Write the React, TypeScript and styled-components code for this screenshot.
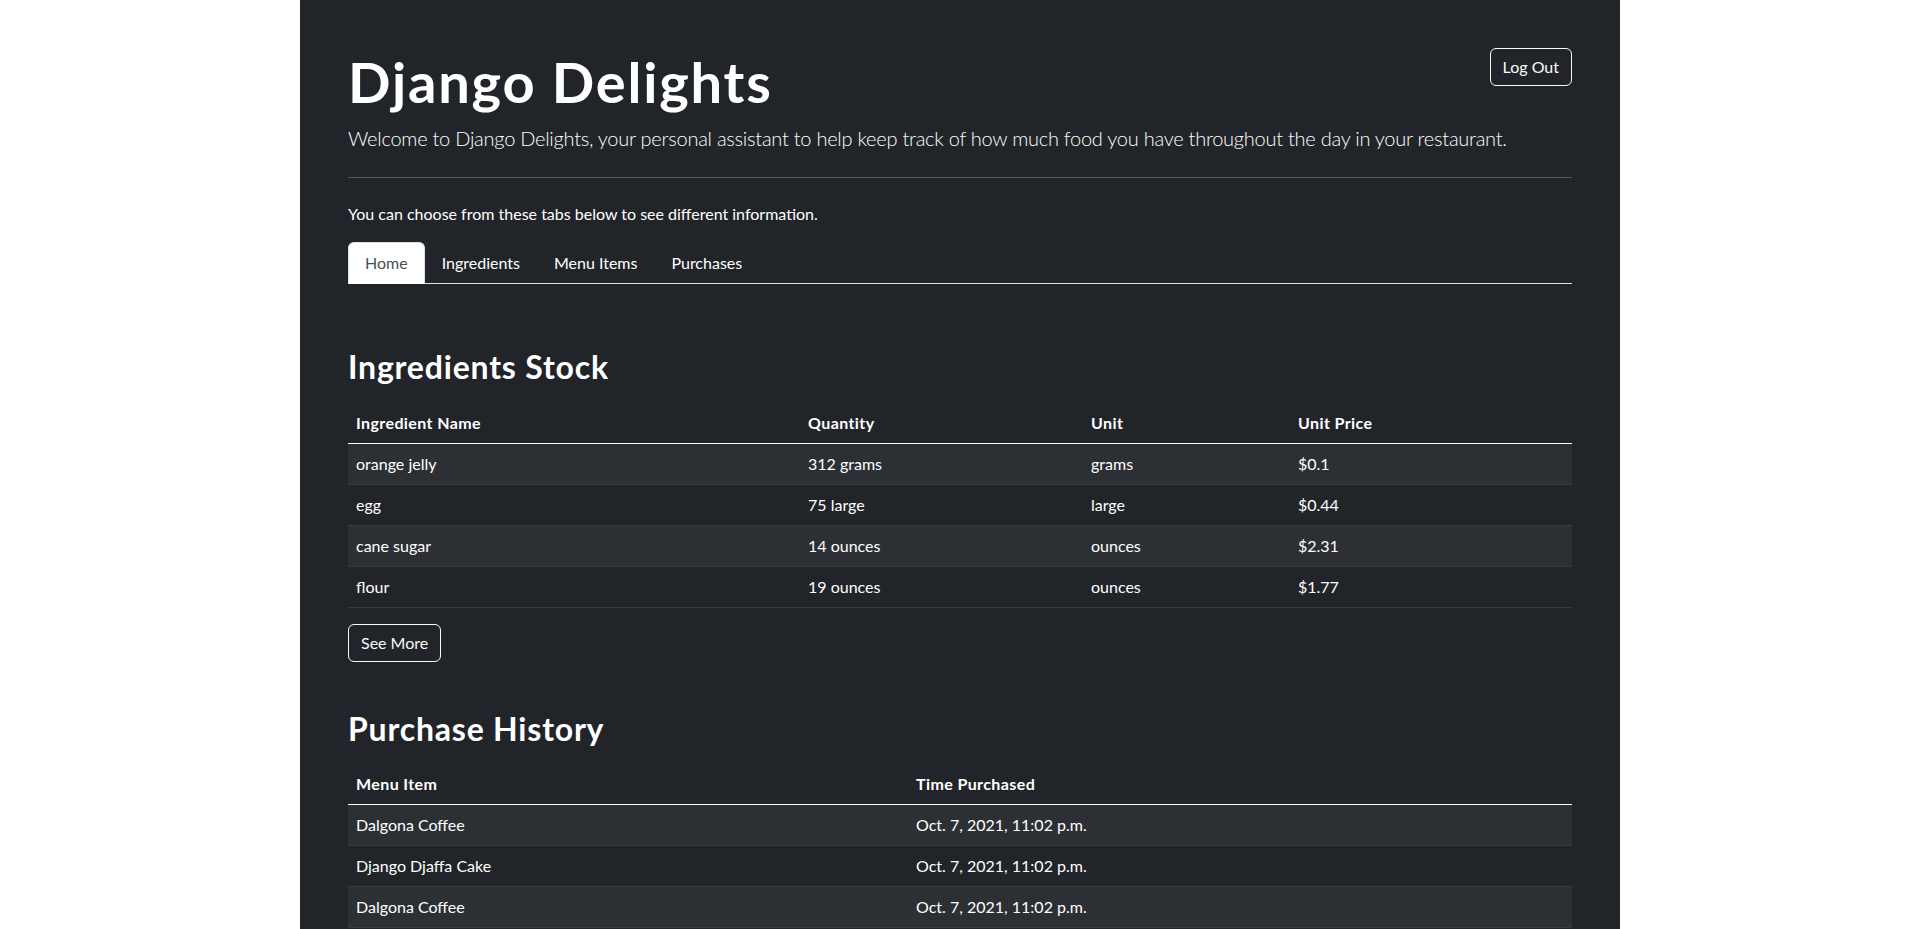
import styled, { createGlobalStyle } from 'styled-components'

const GlobalStyle = createGlobalStyle`
    html, body {
        margin: 0;
        padding: 0;
        background: #fff;
        overflow: hidden;
    }
    body {
        font-family: Lato, "Liberation Sans", sans-serif;
        font-size: 16px;
        line-height: 1.5;
        color: #fff;
    }
    *, *::before, *::after {
        box-sizing: border-box;
    }
`

const Page = styled.div`
    width: 1320px;
    min-height: 100vh;
    margin: 0 auto;
    padding: 48px;
    background-color: #212529;
`

const TitleRow = styled.div`
    display: flex;
    justify-content: space-between;
    align-items: flex-start;
`

const Title = styled.h1`
    margin: 0 0 8px;
    font-size: 56px;
    font-weight: 700;
    line-height: 1.2;
    letter-spacing: 1.8px;
`

const Lead = styled.p`
    margin: 0;
    font-size: 20px;
    font-weight: 300;
    letter-spacing: -0.25px;
`

const Divider = styled.hr`
    margin: 24px 0;
    border: 0;
    border-top: 1px solid rgba(255, 255, 255, 0.25);
`

const Note = styled.p`
    margin: 0 0 16px;
`

const OutlineButton = styled.button`
    padding: 6px 12px;
    font-family: inherit;
    font-size: 16px;
    line-height: 24px;
    color: #f8f9fa;
    background: transparent;
    border: 1px solid #f8f9fa;
    border-radius: 6px;
    cursor: pointer;
`

const Tabs = styled.ul`
    display: flex;
    margin: 0;
    padding: 0;
    list-style: none;
    border-bottom: 1px solid #dee2e6;
`

const Tab = styled.li<{ $active?: boolean }>`
    margin-bottom: -1px;
    padding: 8px 16px;
    border: 1px solid transparent;
    border-radius: 6px 6px 0 0;
    color: ${(p) => (p.$active ? '#495057' : '#fff')};
    background: ${(p) => (p.$active ? '#fff' : 'transparent')};
    ${(p) => p.$active && 'border-color: #dee2e6 #dee2e6 #fff;'}
    cursor: pointer;
`

const Section = styled.section<{ $gap: number }>`
    margin-top: ${(p) => p.$gap}px;
`

const Heading = styled.h2`
    margin: 0 0 16px;
    font-size: 32px;
    font-weight: 700;
    line-height: 1.2;
    letter-spacing: 0.8px;
`

const Table = styled.table`
    width: 100%;
    margin-bottom: 16px;
    border-collapse: collapse;
    table-layout: fixed;

    tbody tr:nth-child(odd) td {
        background-color: #2c3034;
    }
`

const HeadCell = styled.th<{ $width: number }>`
    width: ${(p) => p.$width}px;
    padding: 8px;
    text-align: left;
    font-weight: 700;
    letter-spacing: 0.4px;
    border-bottom: 1px solid #fff;
`

const Cell = styled.td`
    padding: 8px;
    border-bottom: 1px solid #373b3e;
`

const ingredients = [
    ['orange jelly', '312 grams', 'grams', '$0.1'],
    ['egg', '75 large', 'large', '$0.44'],
    ['cane sugar', '14 ounces', 'ounces', '$2.31'],
    ['flour', '19 ounces', 'ounces', '$1.77'],
]

const purchases = [
    ['Dalgona Coffee', 'Oct. 7, 2021, 11:02 p.m.'],
    ['Django Djaffa Cake', 'Oct. 7, 2021, 11:02 p.m.'],
    ['Dalgona Coffee', 'Oct. 7, 2021, 11:02 p.m.'],
]

const tabs = ['Home', 'Ingredients', 'Menu Items', 'Purchases']

export default function App() {
    return (
        <>
            <GlobalStyle />
            <Page>
                <TitleRow>
                    <Title>Django Delights</Title>
                    <OutlineButton>Log Out</OutlineButton>
                </TitleRow>
                <Lead>
                    Welcome to Django Delights, your personal assistant to help keep track of how
                    much food you have throughout the day in your restaurant.
                </Lead>
                <Divider />
                <Note>You can choose from these tabs below to see different information.</Note>
                <Tabs>
                    {tabs.map((t, i) => (
                        <Tab key={t} $active={i === 0}>
                            {t}
                        </Tab>
                    ))}
                </Tabs>

                <Section $gap={64}>
                    <Heading>Ingredients Stock</Heading>
                    <Table>
                        <thead>
                            <tr>
                                <HeadCell $width={452}>Ingredient Name</HeadCell>
                                <HeadCell $width={283}>Quantity</HeadCell>
                                <HeadCell $width={207}>Unit</HeadCell>
                                <HeadCell $width={282}>Unit Price</HeadCell>
                            </tr>
                        </thead>
                        <tbody>
                            {ingredients.map((row) => (
                                <tr key={row[0]}>
                                    {row.map((c, i) => (
                                        <Cell key={i}>{c}</Cell>
                                    ))}
                                </tr>
                            ))}
                        </tbody>
                    </Table>
                    <OutlineButton>See More</OutlineButton>
                </Section>

                <Section $gap={48}>
                    <Heading>Purchase History</Heading>
                    <Table>
                        <thead>
                            <tr>
                                <HeadCell $width={560}>Menu Item</HeadCell>
                                <HeadCell $width={664}>Time Purchased</HeadCell>
                            </tr>
                        </thead>
                        <tbody>
                            {purchases.map((row, r) => (
                                <tr key={r}>
                                    {row.map((c, i) => (
                                        <Cell key={i}>{c}</Cell>
                                    ))}
                                </tr>
                            ))}
                        </tbody>
                    </Table>
                </Section>
            </Page>
        </>
    )
}
